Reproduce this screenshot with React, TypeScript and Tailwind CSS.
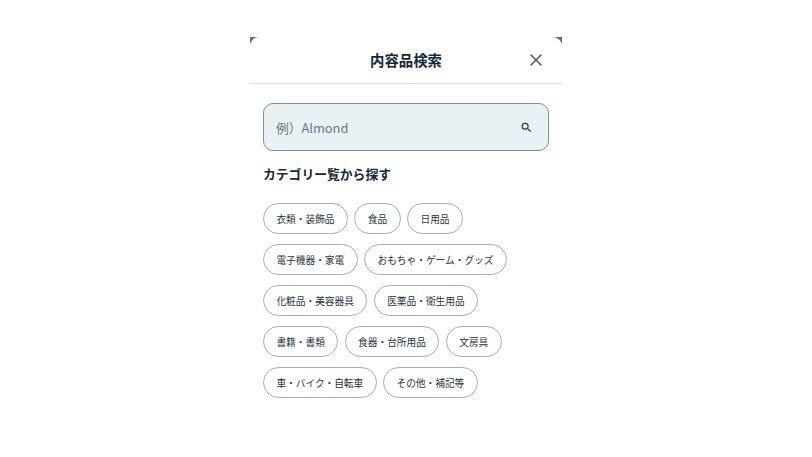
import { X } from "lucide-react";

const rows = [
  ["衣類・装飾品", "食品", "日用品"],
  ["電子機器・家電", "おもちゃ・ゲーム・グッズ"],
  ["化粧品・美容器具", "医薬品・衛生用品"],
  ["書籍・書類", "食器・台所用品", "文房具"],
  ["車・バイク・自転車", "その他・補記等"],
];

export default function App() {
  return (
    <div className="h-[457px] w-[812px] overflow-hidden bg-white pt-[37px] font-['Noto_Sans_CJK_JP',sans-serif] text-[#12293a]">
      {/* modal */}
      <div className="ml-[250px] w-[312px] bg-[#5f707c]">
        <div className="rounded-t-[9px] bg-white">
          <div className="relative flex h-[47px] items-center justify-center border-b border-[#d9dee1]">
            <h1 className="text-[14.4px] font-bold leading-none">内容品検索</h1>
            <X size={20} strokeWidth={1.9} className="absolute right-[16px] top-[13px] text-[#4a6072]" />
          </div>

          <div className="px-[13px] pb-[59px] pt-[19px]">
            <div className="flex h-[48px] w-[286px] items-center justify-between rounded-[10px] border border-[#7d919c] bg-[#e9f1f5] pl-[12px] pr-[15px]">
              <span className="pt-[1px] text-[12.8px] text-[#61798a]">例）Almond</span>
              <svg viewBox="0 0 24 24" className="h-[13px] w-[13px] fill-[#12293a]">
                <path d="M15.5 14h-.79l-.28-.27A6.47 6.47 0 0 0 16 9.5 6.5 6.5 0 1 0 9.5 16c1.61 0 3.09-.59 4.23-1.57l.27.28v.79l5 4.99L20.49 19l-4.99-5zm-6 0C7.01 14 5 11.99 5 9.5S7.01 5 9.5 5 14 7.01 14 9.5 11.99 14 9.5 14z" />
              </svg>
            </div>

            <h2 className="mt-[14px] text-[12.8px] font-bold leading-[18px]">カテゴリー覧から探す</h2>

            <div className="mt-[20px] flex flex-col gap-[10px]">
              {rows.map((row, i) => (
                <div key={i} className="flex gap-[6.5px]">
                  {row.map((c) => (
                    <span
                      key={c}
                      className="flex h-[31px] items-center rounded-full border border-[#a3b0b9] px-[12.4px] pt-[1px] text-[9.7px] text-[#1d3444]"
                    >
                      {c}
                    </span>
                  ))}
                </div>
              ))}
            </div>
          </div>
        </div>
      </div>
    </div>
  );
}
